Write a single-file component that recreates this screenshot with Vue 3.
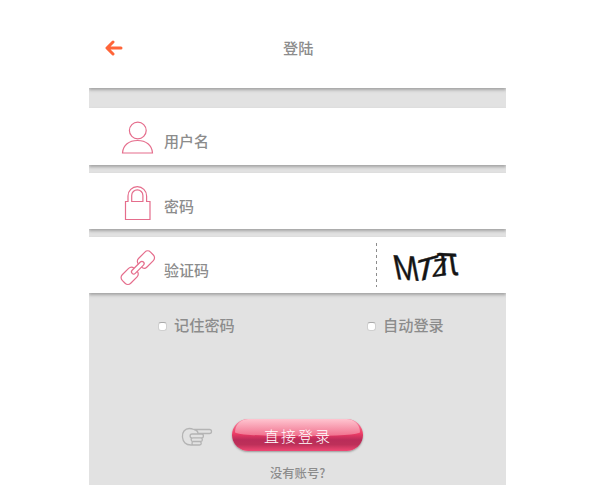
<script setup>
const fields = [
  { id: 'user', label: '用户名' },
  { id: 'lock', label: '密码' },
  { id: 'link', label: '验证码' },
]
const glyphs = [
  { c: 'M', t: 'matrix(1.2 0.1 0.28 1.4 11 37)' },
  { c: 'T', t: 'matrix(1.4 -0.38 -0.28 1.3 28 41)' },
  { c: 'Z', t: 'matrix(0.95 -0.12 -0.06 1.0 47 35)' },
  { c: 'π', t: 'matrix(1.24 0.06 0.24 1.6 54 32)' },
]
</script>

<template>
  <main class="phone">
    <header class="bar">
      <svg class="back" viewBox="0 0 18 16"><path d="M8 2L2 8l6 6M2.500 8H16" /></svg>
      <h1>登陆</h1>
    </header>
    <section class="fields">
      <div v-for="f in fields" :key="f.id" class="field">
        <svg class="icon" viewBox="0 0 38 38">
          <template v-if="f.id === 'user'">
            <circle cx="19.800" cy="10.500" r="8.400" />
            <path d="M4.500 33C5 25 11 20.500 19.500 20.500S34 25 34.500 33Z" />
          </template>
          <template v-else-if="f.id === 'lock'">
            <path d="M7.500 16.500H10V11a9.300 9.300 0 0 1 18.600 0v5.500H32V34.500H7.500Z" />
            <path d="M13.700 16.500V10.500a5.600 5.600 0 0 1 11.200 0v6Z" />
          </template>
          <template v-else>
            <g transform="translate(19.800 18.700) rotate(-45)">
              <path d="M-3 2.200V2a4 4 0 0 1-4 4H-16a4 4 0 0 1-4-4V-2a4 4 0 0 1 4-4h9a4 4 0 0 1 4 3.800" />
              <path d="M3-2.200V-2a4 4 0 0 1 4-4H16a4 4 0 0 1 4 4V2a4 4 0 0 1-4 4H7a4 4 0 0 1-4-3.800" />
              <rect x="-8" y="-2.200" width="16" height="4.400" rx="2.200" />
            </g>
          </template>
        </svg>
        <span class="label">{{ f.label }}</span>
        <svg v-if="f.id === 'link'" class="captcha" viewBox="0 0 84 46">
          <text v-for="(g, i) in glyphs" :key="i" :transform="g.t">{{ g.c }}</text>
        </svg>
      </div>
    </section>
    <div class="options">
      <label><i class="box"></i>记住密码</label>
      <label><i class="box"></i>自动登录</label>
    </div>
    <div class="actions">
      <svg class="hand" viewBox="0 0 34 22">
        <path d="M14 3.500H29.500a2 2 0 0 1 0 4H18M14 3.500C10 2 6 2.500 4 5 1.500 8 2 14 5 17q2 2 6 2h8.500a1.700 1.700 0 0 0 0-3.500M14 3.500q4 1 4 4M12 8H21.500a1.900 1.900 0 0 1 0 3.800H13M20.500 11.800a1.800 1.800 0 0 1 0 3.700H13M12 8a1.900 1.900 0 0 0 0 3.800M13 11.800a1.800 1.800 0 0 0 0 3.700q-2 1.500 0 3.500" />
      </svg>
      <button class="login">直接登录</button>
    </div>
    <p class="signup">没有账号?</p>
  </main>
</template>

<style>
body { background: #fff; }
</style>
<style scoped>
.phone { width: 417px; height: 485px; margin-left: 89px; overflow: hidden; background: #e2e2e2; color: #8c8c8c; font-family: "Noto Sans CJK SC", sans-serif; }
.bar { height: 88px; box-sizing: border-box; padding: 40px 0 0 16px; display: flex; align-items: flex-start; background: #fff; box-shadow: 0 2px 3px #a2a2a2; }
.back { width: 18px; height: 16px; fill: none; stroke: #ff6539; stroke-width: 3; stroke-linecap: round; stroke-linejoin: round; }
h1 { margin: -4px 0 0 160px; font-size: 15.200px; line-height: 22px; font-weight: 500; }
.fields { padding-top: 20px; display: grid; gap: 8px; }
.field { height: 56px; display: flex; align-items: center; background: #fff; box-shadow: 0 2px 3px #a2a2a2; }
.field:first-child { height: 57px; }
.icon { width: 38px; height: 38px; margin: 5px 0 0 29px; fill: none; stroke: #e56d8c; stroke-width: 1.2; }
.label { width: 100px; margin: 9px 0 0 8px; font-size: 15px; line-height: 22px; font-weight: 500; }
.captcha { width: 84px; height: 46px; margin-left: 121px; overflow: visible; }
.field:last-child { position: relative; }
.field:last-child::after { content: ""; position: absolute; left: 287px; top: 6px; width: 1px; height: 44px; background: repeating-linear-gradient(#8c8c8c 0 3px, transparent 3px 6px); }
.captcha text { font: 25px "Liberation Sans", sans-serif; fill: #151515; stroke: #151515; stroke-width: .3; }
.options { display: flex; padding: 20px 0 0 69px; }
.options label { width: 209px; display: flex; align-items: center; flex-shrink: 0; font-size: 15.200px; line-height: 22px; font-weight: 500; }
.box { width: 9px; height: 9px; margin: 5px 7px 0 0; box-sizing: border-box; border: 1px solid #d0d0d0; border-top-color: #aaa; border-radius: 3px; background: #fff; }
.actions { display: flex; align-items: center; margin-top: 84px; padding-left: 91px; }
.hand { width: 34px; height: 22px; margin-top: 3px; fill: none; stroke: #b4b4b4; stroke-width: 1.3; }
.login { position: relative; z-index: 0; overflow: hidden; width: 131px; height: 32px; margin-left: 18px; padding: 0 0 0 1px; border: 0; border-radius: 16px; background: linear-gradient(#f58aa3, #ed3d66 45%, #ba2c59 65%, #bd3059 80%, #f04773); color: #fff; font-family: inherit; font-size: 15px; font-weight: 300; letter-spacing: 2px; box-shadow: 0 1px 2px #999; }
.login::before { content: ""; position: absolute; z-index: -1; left: 3px; right: 3px; top: 0; height: 17px; border-radius: 14px 14px 45% 45% / 14px 14px 4px 4px; background: linear-gradient(#ffc5d0, #f0708d); }
.signup { margin: 12px 0 0 181px; font-size: 12.300px; line-height: 20px; font-weight: 500; }
</style>
